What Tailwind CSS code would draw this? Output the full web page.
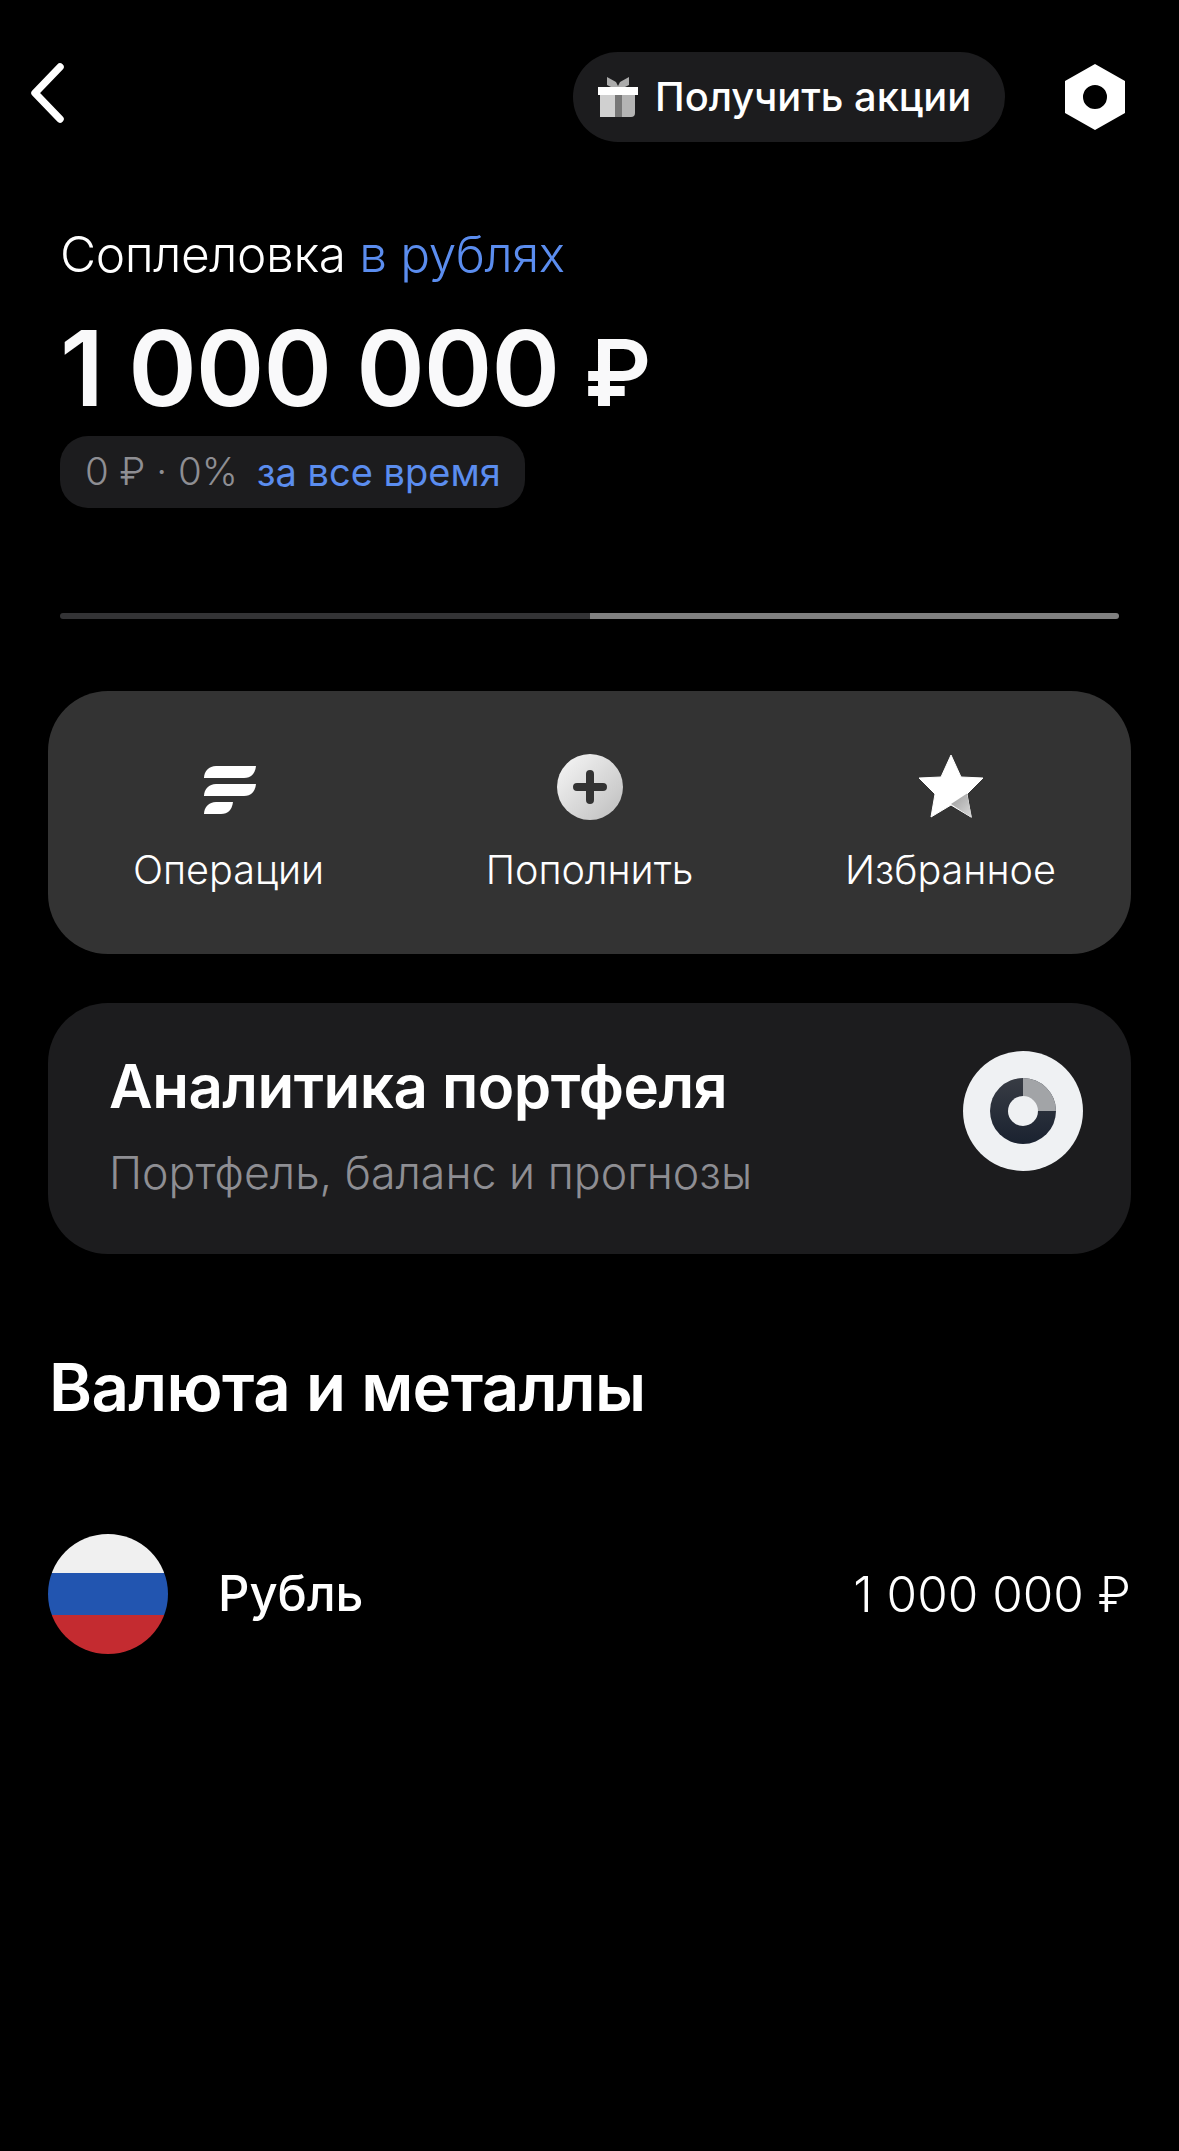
<!doctype html>
<html lang="ru"><head><meta charset="utf-8"><script src="https://cdn.jsdelivr.net/npm/@tailwindcss/browser@4"></script></head>
<body class="bg-black">
<div class="w-[1179px] h-[2151px] bg-black text-white overflow-hidden font-['Inter',sans-serif]">
  <header class="h-[142px] pt-[52px] pl-[30px] pr-[54px] flex items-start">
    <svg class="mt-[11px] w-[34px] h-[60px]" viewBox="0 0 34 60"><path d="M30 4 5 30l25 26" fill="none" stroke="#fff" stroke-width="7.5" stroke-linecap="round" stroke-linejoin="round"/></svg>
    <div class="ml-[509px] w-[432px] h-[90px] rounded-full bg-[#1c1c1e] flex items-center pl-[25px]">
      <svg class="w-[40px] h-[40px] shrink-0" viewBox="0 0 40 40"><path d="M9 0l9 5 2 4 2-4 9-5v8l-4 2H13l-4-2z" fill="#ababab"/><rect x="0" y="10" width="40" height="8" fill="#fff"/><path d="M2 18h16v22H2z" fill="#d0d0d0"/><path d="M17 18h7v22h-7z" fill="#777"/><path d="M24 18h13v18a4 4 0 0 1-4 4h-9z" fill="#b4b4b4"/></svg>
      <span class="ml-[17px] text-[39.8px] font-medium leading-none">Получить акции</span>
    </div>
    <svg class="ml-[60px] mt-[12px] w-[60px] h-[66px] shrink-0" viewBox="0 0 60 66"><path fill-rule="evenodd" d="M30 0 60 17v32L30 66 0 49V17zM30 21a12 12 0 1 0 0 24 12 12 0 0 0 0-24z" fill="#fff"/></svg>
  </header>

  <section class="pl-[60px] pt-[84px]">
    <p class="text-[49.6px] leading-[56px] font-light tracking-[-0.4px]">Соплеловка <span class="text-[#5b8def]">в рублях</span></p>
    <p class="mt-[31px] text-[104px] leading-[110px] font-semibold tracking-[-1px] text-[#f9f9fa]">1 000 000 <span class="text-[92px]">₽</span></p>
    <div class="mt-[8px] w-[465px] h-[72px] rounded-[28px] bg-[#1c1c1e] flex items-center pl-[25px] font-light">
      <span class="text-[38.5px] text-[#8e8e93]">0 ₽ · 0%</span><span class="ml-[19px] text-[38px] text-[#5b8def] font-normal">за все время</span>
    </div>
    <div class="mt-[105px] w-[1059px] h-[6px] rounded-full overflow-hidden flex">
      <div class="w-[530px] bg-[#333335]"></div><div class="flex-1 bg-[#808080]"></div>
    </div>
  </section>

  <section class="mx-[48px] mt-[72px] h-[263px] rounded-[60px] bg-[#333333] grid grid-cols-3">
    <div class="flex flex-col items-center pt-[63px]">
      <svg class="w-[66px] h-[66px]" viewBox="0 0 66 66"><g fill="#fff"><path d="M20 12H60C59 20 55 24 48 24H8C8 17 13 12 20 12z"/><path d="M20 30H60C59 38 55 42 48 42H8C8 35 13 30 20 30z"/><path d="M20 48H37C36 56 32 60 25 60H8C8 53 13 48 20 48z"/></g></svg>
      <span class="mt-[26px] text-[39.6px] leading-[48px] font-light">Операции</span>
    </div>
    <div class="flex flex-col items-center pt-[63px]">
      <svg class="w-[66px] h-[66px]" viewBox="0 0 66 66"><defs><linearGradient id="p" x1="0" y1="0" x2="1" y2="1"><stop offset="0" stop-color="#f8f8f8"/><stop offset="1" stop-color="#bdbdbd"/></linearGradient></defs><circle cx="33" cy="33" r="33" fill="url(#p)"/><path d="M33 20v26M20 33h26" stroke="#333" stroke-width="8" stroke-linecap="round"/></svg>
      <span class="mt-[26px] text-[39.6px] leading-[48px] font-light">Пополнить</span>
    </div>
    <div class="flex flex-col items-center pt-[63px]">
      <svg class="w-[66px] h-[66px]" viewBox="0 0 66 66"><defs><linearGradient id="s" x1="0" y1="0" x2="1" y2="1"><stop offset="0" stop-color="#9c9c9c"/><stop offset="1" stop-color="#dadada"/></linearGradient></defs><path d="M33 1 43 23 65 24 49 40 53 63 33 51 13 63 17 40 1 24 23 23z" fill="#fff" stroke="#fff" stroke-width="1" stroke-linejoin="round"/><path d="M33 50 49 39.5 54 64z" fill="url(#s)"/></svg>
      <span class="mt-[26px] text-[39.6px] leading-[48px] font-light">Избранное</span>
    </div>
  </section>

  <section class="mx-[48px] mt-[49px] h-[251px] rounded-[60px] bg-[#1c1c1e] flex items-start justify-between pl-[61px] pr-[48px]">
    <div class="pt-[49px]">
      <p class="text-[60px] leading-[68px] font-semibold tracking-[-0.5px]">Аналитика портфеля</p>
      <p class="mt-[28px] text-[44.7px] leading-[50px] font-light text-[#8e8e93]">Портфель, баланс и прогнозы</p>
    </div>
    <svg class="mt-[48px] w-[120px] h-[120px] shrink-0" viewBox="0 0 120 120"><defs><linearGradient id="d" x1="0" y1="0" x2="0" y2="1"><stop offset="0" stop-color="#383c44"/><stop offset="1" stop-color="#1a2230"/></linearGradient></defs><circle cx="60" cy="60" r="60" fill="#eff1f3"/><circle cx="60" cy="60" r="33" fill="url(#d)"/><path d="M60 27a33 33 0 0 1 33 33H60z" fill="#a2a4a7"/><circle cx="60" cy="60" r="15" fill="#eff1f3"/></svg>
  </section>

  <h2 class="ml-[49px] mt-[96px] text-[65.3px] leading-[76px] font-semibold tracking-[-0.6px]">Валюта и металлы</h2>

  <section class="mx-[48px] mt-[108px] flex items-center h-[120px]">
    <svg class="w-[120px] h-[120px] shrink-0" viewBox="0 0 120 120"><defs><clipPath id="f"><circle cx="60" cy="60" r="60"/></clipPath></defs><g clip-path="url(#f)"><rect width="120" height="39" fill="#f0f0f0"/><rect y="39" width="120" height="42" fill="#2255b0"/><rect y="81" width="120" height="39" fill="#c42b30"/></g></svg>
    <span class="ml-[50px] text-[49px] font-medium">Рубль</span>
    <span class="ml-auto text-[49.5px] font-light">1 000 000 ₽</span>
  </section>
</div>
</body></html>
